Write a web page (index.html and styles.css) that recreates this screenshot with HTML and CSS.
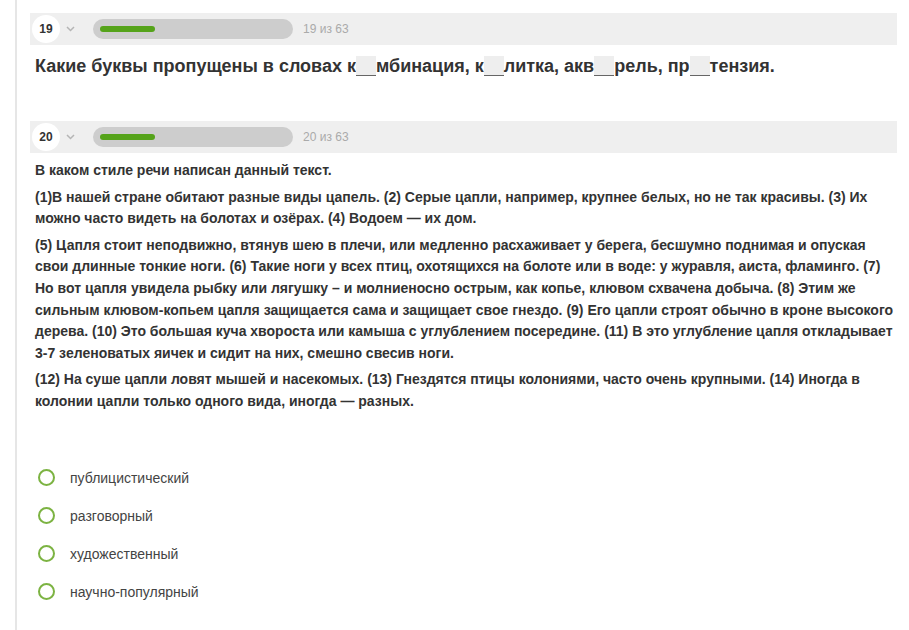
FILE: index.html
```html
<!DOCTYPE html>
<html lang="ru">
<head>
    <meta charset="UTF-8">
    <title>Тест</title>
    <link rel="stylesheet" href="styles.css">
</head>
<body>
    <div class="page">
        <div class="question">
            <div class="qhead">
                <span class="num">19</span>
                <svg class="chev" width="9" height="6" viewBox="0 0 9 6"><path d="M1 1l3.5 3.5L8 1" fill="none" stroke="#b5b5b5" stroke-width="1.5"/></svg>
                <div class="progress"><div class="fill"></div></div>
                <span class="count">19 из 63</span>
            </div>
            <div class="title">Какие буквы пропущены в словах к<span class="blank"></span>мбинация, к<span class="blank"></span>литка, акв<span class="blank"></span>рель, пр<span class="blank"></span>тензия.</div>
        </div>

        <div class="question second">
            <div class="qhead">
                <span class="num">20</span>
                <svg class="chev" width="9" height="6" viewBox="0 0 9 6"><path d="M1 1l3.5 3.5L8 1" fill="none" stroke="#b5b5b5" stroke-width="1.5"/></svg>
                <div class="progress"><div class="fill"></div></div>
                <span class="count">20 из 63</span>
            </div>
            <div class="text">
                <p>В каком стиле речи написан данный текст.</p>
                <p>(1)В нашей стране обитают разные виды цапель. (2) Серые цапли, например, крупнее белых, но не так красивы. (3) Их можно часто видеть на болотах и озёрах. (4) Водоем — их дом.</p>
                <p>(5) Цапля стоит неподвижно, втянув шею в плечи, или медленно расхаживает у берега, бесшумно поднимая и опуская свои длинные тонкие ноги. (6) Такие ноги у всех птиц, охотящихся на болоте или в воде: у журавля, аиста, фламинго. (7) Но вот цапля увидела рыбку или лягушку – и молниеносно острым, как копье, клювом схвачена добыча. (8) Этим же сильным клювом-копьем цапля защищается сама и защищает свое гнездо. (9) Его цапли строят обычно в кроне высокого дерева. (10) Это большая куча хвороста или камыша с углублением посередине. (11) В это углубление цапля откладывает 3-7 зеленоватых яичек и сидит на них, смешно свесив ноги.</p>
                <p>(12) На суше цапли ловят мышей и насекомых. (13) Гнездятся птицы колониями, часто очень крупными. (14) Иногда в колонии цапли только одного вида, иногда — разных.</p>
            </div>
            <div class="answers">
                <label class="answer"><span class="radio"></span>публицистический</label>
                <label class="answer"><span class="radio"></span>разговорный</label>
                <label class="answer"><span class="radio"></span>художественный</label>
                <label class="answer"><span class="radio"></span>научно-популярный</label>
            </div>
        </div>
    </div>
</body>
</html>
```

FILE: styles.css
```css
body {
    font-family: "Liberation Sans", Arial, sans-serif;
    margin: 0;
    background-color: white;
    color: #333;
}
.page {
    margin-left: 15px;
    border-left: 2px solid #e6e6e6;
    padding: 13px 12px 0 13px;
    min-height: 630px;
    box-sizing: border-box;
}
.qhead {
    background-color: #efefef;
    height: 32px;
    display: flex;
    align-items: center;
    padding-left: 2px;
}
.num {
    width: 28px;
    height: 28px;
    border-radius: 50%;
    background-color: white;
    display: flex;
    align-items: center;
    justify-content: center;
    font-size: 12px;
    font-weight: bold;
    color: #333;
}
.chev {
    margin-left: 6px;
}
.progress {
    margin-left: 18px;
    width: 200px;
    height: 20px;
    border-radius: 10px;
    background-color: #cdcdcd;
    display: flex;
    align-items: center;
    padding-left: 7px;
    box-sizing: border-box;
}
.fill {
    width: 55px;
    height: 6px;
    border-radius: 3px;
    background-color: #55a31a;
}
.count {
    margin-left: 10px;
    font-size: 12px;
    color: #aaa;
}
.title {
    margin-top: 11px;
    padding-left: 5px;
    font-size: 18px;
    font-weight: bold;
    line-height: 20px;
}
.blank {
    display: inline-block;
    width: 20px;
    height: 19px;
    background-color: #eee;
    border-bottom: 1px solid #666;
    vertical-align: -4px;
}
.second {
    margin-top: 45px;
}
.text {
    padding: 7px 0 0 5px;
    font-size: 14px;
    font-weight: bold;
    line-height: 21.6px;
}
.text p {
    margin: 0 0 5px 0;
}
.answers {
    margin-top: 46px;
    padding-left: 8px;
}
.answer {
    display: flex;
    align-items: center;
    height: 38px;
    font-size: 14px;
    color: #444;
}
.radio {
    width: 13px;
    height: 13px;
    border: 2px solid #7cb342;
    border-radius: 50%;
    margin-right: 15px;
}
```
